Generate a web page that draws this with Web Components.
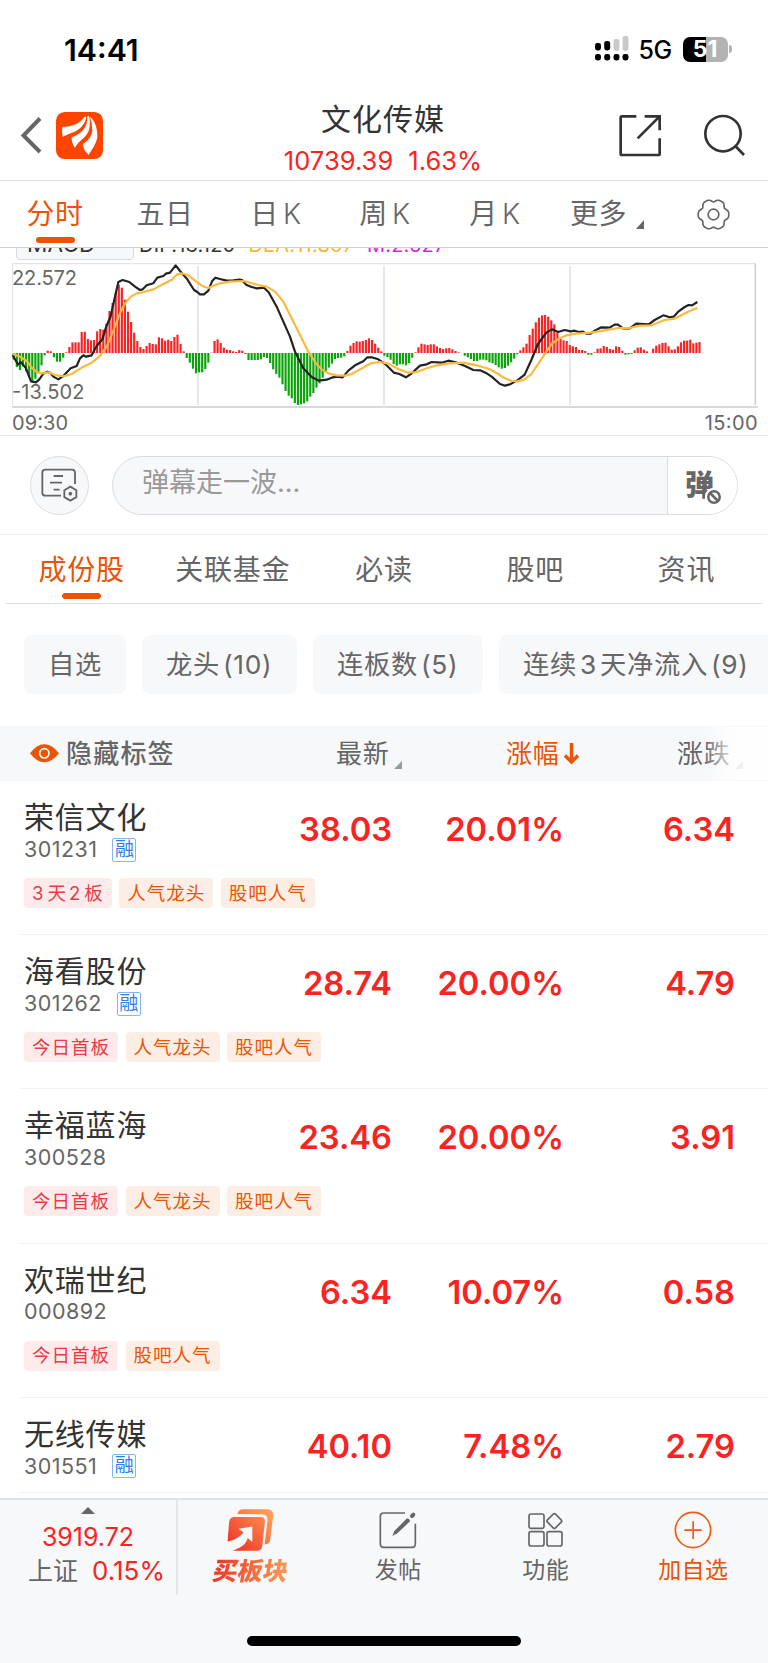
<!DOCTYPE html>
<html lang="zh-CN">
<head>
<meta charset="utf-8">
<title>文化传媒</title>
<style>
  body {
    margin: 0;
    width: 768px;
    height: 1663px;
    overflow: hidden;
    display: flex;
    flex-direction: column;
    background: #fff;
    color: #666;
    font-family: Inter, "Noto Sans CJK SC", sans-serif;
    line-height: 1;
    white-space: nowrap;
    --orange: #ea5404;
    --red: #fb2222;
    --panel: #f7f8fa;
  }
</style>
</head>
<body>
<em-status></em-status>
<em-header name="文化传媒" price="10739.39" change="1.63%"></em-header>
<em-period-tabs></em-period-tabs>
<em-macd></em-macd>
<em-danmu></em-danmu>
<em-section-tabs>
  <span class="on">成份股</span><span>关联基金</span><span>必读</span><span>股吧</span><span>资讯</span>
</em-section-tabs>
<em-chips>
  <span style="width:102px">自选</span><span style="width:155px">龙头<i>(10)</i></span><span style="width:170px">连板数<i>(5)</i></span><span style="width:299px">连续<i>3</i><i>天净流入</i><i>(9)</i></span>
</em-chips>
<em-table-head></em-table-head>
<em-stock name="荣信文化" code="301231" margin price="38.03" pct="20.01%" diff="6.34">
  <em-tag hot><span style="margin-right:3px">3</span>天<span style="margin:0 3px 0 2px">2</span>板</em-tag><em-tag>人气龙头</em-tag><em-tag>股吧人气</em-tag>
</em-stock>
<em-stock name="海看股份" code="301262" margin price="28.74" pct="20.00%" diff="4.79">
  <em-tag hot>今日首板</em-tag><em-tag>人气龙头</em-tag><em-tag>股吧人气</em-tag>
</em-stock>
<em-stock name="幸福蓝海" code="300528" price="23.46" pct="20.00%" diff="3.91">
  <em-tag hot>今日首板</em-tag><em-tag>人气龙头</em-tag><em-tag>股吧人气</em-tag>
</em-stock>
<em-stock name="欢瑞世纪" code="000892" price="6.34" pct="10.07%" diff="0.58">
  <em-tag hot>今日首板</em-tag><em-tag>股吧人气</em-tag>
</em-stock>
<em-stock style="height:95px" name="无线传媒" code="301551" margin price="40.10" pct="7.48%" diff="2.79"></em-stock>
<em-bottom-bar></em-bottom-bar>

<script>
class EmStatus extends HTMLElement {
  constructor() {
    super();
    this.attachShadow({mode: 'open'}).innerHTML = `
      <style>
        :host {
          display: flex;
          align-items: center;
          justify-content: space-between;
          height: 98px;
          padding: 0 36px 0 64px;
          box-sizing: border-box;
          color: #000;
        }
        .time { font-size: 30.3px; font-weight: 600; margin-top: 2px; }
        .right { display: flex; align-items: center; }
        .net { font-size: 25px; font-weight: 500; margin: 2px 11px 0 10px; letter-spacing: -.6px; }
        .battery {
          display: flex;
          align-items: center;
          justify-content: center;
          width: 45px;
          height: 25px;
          border-radius: 7px;
          background: linear-gradient(90deg, #000 52%, #b3b3b3 52%);
          color: #fff;
          font-size: 23px;
          font-weight: 700;
        }
        .cap { width: 3px; height: 8px; margin-left: 1.5px; border-radius: 0 4px 4px 0; background: #b3b3b3; }
      </style>
      <div class="time">14:41</div>
      <div class="right">
        <svg width="34" height="26" viewBox="0 0 34 26">
          <g fill="#c9c9c9">
            <rect x="18.5" y="3" width="6" height="12" rx="2.4"/>
            <rect x="27.5" y="0" width="6" height="15" rx="2.4"/>
          </g>
          <rect x="0" y="7" width="6" height="7.5" rx="2.4"/>
          <rect x="9.2" y="5" width="6" height="9.5" rx="2.4"/>
          <rect x="0" y="18" width="6" height="6.5" rx="2.4"/>
          <rect x="9.2" y="18" width="6" height="6.5" rx="2.4"/>
          <rect x="18.5" y="18" width="6" height="6.5" rx="2.4"/>
          <rect x="27.5" y="18" width="6" height="6.5" rx="2.4"/>
        </svg>
        <span class="net">5G</span>
        <span class="battery">51</span>
        <span class="cap"></span>
      </div>
    `;
  }
}

class EmHeader extends HTMLElement {
  constructor() {
    super();
    this.attachShadow({mode: 'open'}).innerHTML = `
      <style>
        :host {
          display: grid;
          grid-template-columns: 1fr auto 1fr;
          height: 83px;
          box-sizing: border-box;
          padding: 0 22px 0 20px;
          border-bottom: 1px solid #dedede;
        }
        .side { display: flex; align-items: flex-start; padding-top: 14px; }
        .end { justify-content: flex-end; gap: 41px; padding: 16px 0 0; }
        .logo { margin-left: 14px; }
        .back { margin-top: 5px; }
        .mid { text-align: center; }
        h1 { margin: 5px 0 0; font-size: 30px; line-height: 32px; font-weight: 400; color: #333; letter-spacing: 1px; }
        p { display: flex; justify-content: center; gap: 15px; margin: 14px 0 0; font-size: 25.5px; line-height: 24px; color: var(--red); letter-spacing: .05px; }
      </style>
      <div class="side">
        <svg class="back" width="22" height="37" viewBox="0 0 22 37" fill="none" stroke="#666" stroke-width="4">
          <path d="M20 1.500 3.500 18.500 20 35"/>
        </svg>
        <svg class="logo" width="47" height="47" viewBox="168 336 141 141">
          <rect x="168" y="336" width="141" height="141" rx="26" fill="#ff4400"/>
          <g fill="#fff">
            <path d="M187 381C217 380 241 369 254 350L259 350C256 372 240 388 222 396Q205 402 188 410Q185 396 187 381Z"/>
            <path d="M262 349L267 348C274 376 268 402 248 416Q233 428 224 443Q214 428 215 412C243 402 263 385 262 349Z"/>
            <path d="M270 351C286 362 293 390 292 410C290 430 276 447 266 465Q249 450 249 432C266 420 276 408 277 390Q277 370 270 351Z"/>
          </g>
        </svg>
      </div>
      <div class="mid">
        <h1>${this.getAttribute('name')}</h1>
        <p><span>${this.getAttribute('price')}</span><span>${this.getAttribute('change')}</span></p>
      </div>
      <div class="side end">
        <svg width="43" height="43" viewBox="707 342 129 129" fill="none" stroke="#333" stroke-width="8">
          <path d="M759 349H716Q712 349 712 353V461Q712 465 716 465H825Q829 465 829 461V415M784 349H829V391M828 350L763 415"/>
        </svg>
        <svg width="43" height="43" viewBox="959 342 129 129" fill="none" stroke="#333" stroke-width="8">
          <circle cx="1019" cy="401" r="53"/>
          <path d="M1056 438 1082 465"/>
        </svg>
      </div>
    `;
  }
}

class EmPeriodTabs extends HTMLElement {
  constructor() {
    super();
    // six-lobed gear outline
    let gear = [];
    for (let a = 0; a < 360; a += 5) {
      const t = a * Math.PI / 180;
      const r = 43 + 4 * Math.cos(6 * t) - 1.2 * Math.cos(12 * t);
      gear.push((r * Math.cos(t)).toFixed(1) + ',' + (r * Math.sin(t)).toFixed(1));
    }
    this.attachShadow({mode: 'open'}).innerHTML = `
      <style>
        :host {
          display: grid;
          grid-template-columns: 110px 110px 112px 106px 114px 110px 102px;
          height: 67px;
          box-sizing: border-box;
          border-bottom: 1px solid #cfcfd6;
          font-size: 28px;
          letter-spacing: .6px;
        }
        span { display: flex; align-items: center; justify-content: center; position: relative; }
        .on { color: var(--orange); }
        .on::after {
          content: "";
          position: absolute;
          bottom: 4px;
          width: 39px;
          height: 6px;
          border-radius: 3px;
          background: var(--orange);
        }
        b { font-weight: 300; margin-left: 4px; }
        .tri { margin: 21px 0 0 9px; }
      </style>
      <span class="on">分时</span>
      <span>五日</span>
      <span>日<b>K</b></span>
      <span>周<b>K</b></span>
      <span>月<b>K</b></span>
      <span>更多<svg class="tri" width="8" height="9"><path d="M8 0V9H0Z" fill="#666"/></svg></span>
      <span><svg width="33" height="33" viewBox="-49.500 -49.500 99 99" fill="none" stroke="#666" stroke-width="5">
        <polygon points="${gear.join(' ')}" stroke-linejoin="round"/><circle r="16"/>
      </svg></span>
    `;
  }
}

// histogram heights and line points share one unit: a third of a pixel
const ZERO = 339;
const HIST = [
  -20, -42, -51, -40, -55, -70, -85, -77, -60, -37, -7, 7, 5, -13, -26, -26, -14, 2, 18, 32,
  32, 32, 63, 64, 42, 38, 39, 65, 72, 70, 88, 126, 150, 180, 205, 196, 160, 124, 93, 61,
  36, 18, 12, 21, 30, 27, 26, 47, 44, 37, 40, 36, 48, 55, 27, 5, -15, -29, -47, -61,
  -58, -58, -48, -29, 1, 36, 41, 30, 16, 10, 9, 5, 3, 9, 7, -3, -21, -21, -21, -21,
  -19, -12, -15, -30, -49, -63, -74, -94, -114, -128, -136, -150, -156, -154, -151, -145, -131, -120, -104, -91,
  -74, -55, -44, -32, -18, -15, -14, -10, 6, 22, 30, 35, 34, 36, 39, 44, 39, 28, 16, 5,
  -8, -12, -20, -33, -38, -34, -34, -37, -30, -14, 2, 17, 28, 26, 24, 26, 26, 20, 15, 12,
  14, 15, 11, 6, 2, 0, -8, -13, -18, -24, -24, -20, -20, -22, -28, -31, -36, -43, -47, -45,
  -38, -28, -17, -4, 8, 17, 28, 54, 73, 92, 106, 113, 114, 109, 98, 86, 60, 42, 38, 36,
  24, 20, 18, 9, 9, 6, -5, -5, 2, 13, 14, 21, 18, 12, 10, 20, 18, 7, -5, -4,
  -3, 8, 16, 17, 10, 5, 0, 13, 22, 26, 30, 31, 20, 10, 11, 20, 32, 37, 37, 40,
  29, 31, 33
];
const DIF = '38,345 54,374 62,366 77,383 93,424 108,427 118,418 130,401 142,395 150,398 160,410 175,418 190,408 212,385 230,378 240,355 250,346 258,350 275,346 290,318 307,298 318,262 332,228 345,170 355,126 368,120 388,126 405,140 420,150 428,148 440,136 460,130 472,113 490,108 498,101 510,98 527,76 540,93 562,118 582,150 592,156 600,163 612,163 625,152 636,124 646,113 660,117 680,122 700,121 718,119 726,120 738,134 755,141 770,145 792,143 806,157 830,200 850,245 870,290 885,335 910,385 935,411 957,422 980,419 995,413 1010,410 1028,412 1045,392 1065,376 1090,364 1102,352 1115,352 1135,358 1158,374 1182,398 1198,402 1218,412 1235,400 1260,377 1280,373 1295,366 1325,368 1345,362 1370,368 1395,378 1420,390 1440,391 1460,400 1475,410 1500,432 1515,437 1530,433 1552,421 1574,404 1594,360 1614,312 1639,278 1656,268 1674,276 1694,270 1712,274 1724,272 1736,276 1749,275 1759,281 1772,281 1784,272 1804,262 1829,263 1844,254 1854,254 1869,265 1889,265 1909,251 1946,253 1964,240 1990,226 2009,232 2021,230 2036,214 2054,201 2066,195 2076,196 2092,186';
const DEA = '38,341 60,350 80,363 95,383 112,397 125,400 145,397 165,405 190,409 215,402 250,380 275,368 298,350 320,320 340,272 360,220 378,185 395,168 410,160 430,156 460,148 490,132 515,119 530,104 545,100 565,106 585,122 605,137 625,144 640,137 660,130 690,125 730,123 750,128 775,135 800,140 825,155 850,185 875,235 900,285 925,335 950,373 965,388 985,400 1010,406 1035,407 1055,402 1080,388 1115,369 1140,366 1165,371 1195,387 1225,398 1250,396 1280,385 1310,376 1350,370 1390,368 1430,376 1470,388 1495,402 1515,415 1535,423 1552,424 1574,418 1594,402 1619,365 1639,335 1656,310 1674,298 1699,286 1729,281 1774,278 1814,271 1854,264 1889,264 1919,257 1954,256 1994,240 2024,236 2049,223 2074,211 2092,204';

class EmMacd extends HTMLElement {
  constructor() {
    super();
    const bars = HIST.map((h, i) => {
      const x = (38 + i * 9.267).toFixed(1);
      return `<rect x="${x}" y="${h > 0 ? ZERO - h : ZERO}" width="6.500" height="${Math.abs(h)}" fill="${h > 0 ? '#fa2323' : '#0aa30a'}"/>`;
    }).join('');
    const grid = [594, 1152, 1710].map(x => `<path d="M${x} 77V495" stroke="#e3e8ee" stroke-width="6"/>`).join('');
    this.attachShadow({mode: 'open'}).innerHTML = `
      <style>
        :host {
          display: flex;
          flex-direction: column;
          justify-content: flex-end;
          height: 188px;
          box-sizing: border-box;
          overflow: hidden;
          border-bottom: 1px solid #e6e6e9;
          font-size: 20px;
        }
        .legend { display: flex; align-items: flex-end; padding-left: 16px; flex: none; letter-spacing: .2px; }
        .pick {
          width: 118px;
          height: 36px;
          line-height: 37px;
          box-sizing: border-box;
          padding-left: 10px;
          border: 1px solid #d8dbe0;
          border-radius: 4px;
          background: var(--panel);
          color: #333;
          font-size: 22.5px;
        }
        .legend span { margin-left: 13px; padding-bottom: 5px; }
        svg { display: block; flex: none; }
        text { fill: #666; font-size: 60px; }
      </style>
      <div class="legend">
        <div class="pick">MACD</div>
        <span style="color:#333;margin-left:5px">DIF:13.120</span>
        <span style="color:#fdb52c">DEA:11.807</span>
        <span style="color:#e01be0">M:2.627</span>
      </div>
      <svg width="768" height="175" viewBox="0 60 2304 525">
        <path d="M38 71H2266" stroke="#e4e4e6" stroke-width="4"/>
        <path d="M38 70V495" stroke="#dcdfe4" stroke-width="3"/>
        <path d="M2266 70V495" stroke="#ccd0d6" stroke-width="5"/>
        ${grid}
        <path d="M36 501H2274" stroke="#cdcdd1" stroke-width="5"/>
        ${bars}
        <g fill="none" stroke-width="6.500" stroke-linejoin="round">
          <polyline points="${DIF}" stroke="#222"/>
          <polyline points="${DEA}" stroke="#fdb93a"/>
        </g>
        <text x="36" y="135" textLength="195">22.572</text>
        <text x="36" y="476" textLength="217">-13.502</text>
        <text x="36" y="570" textLength="168">09:30</text>
        <text x="2114" y="570" textLength="159">15:00</text>
      </svg>
    `;
  }
}

class EmDanmu extends HTMLElement {
  constructor() {
    super();
    this.attachShadow({mode: 'open'}).innerHTML = `
      <style>
        :host {
          display: flex;
          align-items: center;
          gap: 23px;
          height: 99px;
          box-sizing: border-box;
          padding: 1px 30px 0;
          border-bottom: 1px solid #f0f0f2;
        }
        .set, .input {
          box-sizing: border-box;
          height: 59px;
          border: 1px solid #dadbe1;
          border-radius: 30px;
          background: var(--panel);
        }
        .set { width: 59px; display: flex; align-items: center; justify-content: center; }
        .input { display: flex; width: 626px; overflow: hidden; }
        .hint { flex: 1; padding-left: 29px; line-height: 52px; font-size: 27px; color: #999; }
        .send {
          width: 69px;
          border-left: 1px solid #dadbe1;
          background: #fff;
          font-size: 29px;
          line-height: 57px;
          font-weight: 900;
          position: relative;
          text-indent: 17px;
        }
        .send svg { position: absolute; left: 37px; top: 31px; }
      </style>
      <div class="set">
        <svg width="37" height="35" viewBox="125 88 111 105" fill="none" stroke="#666" stroke-width="5.500">
          <path d="M185 171H138Q129 171 129 162V102Q129 93 138 93H218Q227 93 227 102V136M163 112H191M152 132H188M163 153H181"/>
          <path d="M213 144 231 154.500V175.500L213 186 195 175.500V154.500Z"/>
          <circle cx="213" cy="165" r="5.500" fill="#666" stroke="none"/>
        </svg>
      </div>
      <div class="input">
        <div class="hint">弹幕走一波...</div>
        <div class="send">弹<svg width="18" height="18" viewBox="-9 -9 18 18" fill="none" stroke="#666" stroke-width="2.500">
          <circle r="8" fill="#fff" stroke="#fff"/><circle r="5.700"/><path d="M-4-4 4 4"/>
        </svg></div>
      </div>
    `;
  }
}

class EmSectionTabs extends HTMLElement {
  constructor() {
    super();
    this.attachShadow({mode: 'open'}).innerHTML = `
      <style>
        :host {
          display: grid;
          grid-template-columns: repeat(5, 1fr);
          height: 69px;
          margin: 0 6px;
          box-sizing: border-box;
          border-bottom: 1px solid #dfe0e3;
          font-size: 28px;
          letter-spacing: .8px;
        }
        ::slotted(span) { display: flex; align-items: center; justify-content: center; padding-top: 2px; }
        ::slotted(.on) {
          color: var(--orange);
          background: linear-gradient(var(--orange), var(--orange)) no-repeat center 58px / 33px 6px,
            radial-gradient(circle at 3px 3px, var(--orange) 2.6px, transparent 3.2px) no-repeat 56px 58px / 6px 6px,
            radial-gradient(circle at 3px 3px, var(--orange) 2.6px, transparent 3.2px) no-repeat 89px 58px / 6px 6px;
        }
      </style>
      <slot></slot>
    `;
  }
}

class EmChips extends HTMLElement {
  constructor() {
    super();
    this.attachShadow({mode: 'open'}).innerHTML = `
      <style>
        :host { display: flex; gap: 16px; padding: 31px 0 32px 24px; height: 59px; overflow: hidden; font-size: 26.3px; letter-spacing: .7px; }
        ::slotted(span) {
          flex: none;
          box-sizing: border-box;
          display: flex;
          gap: 3px;
          align-items: center;
          padding: 2px 0 0 24px;
          border-radius: 8px;
          background: var(--panel);
        }
      </style>
      <slot></slot>
    `;
    for (const i of this.querySelectorAll('i')) {
      i.style.fontStyle = 'normal';
    }
  }
}

class EmTableHead extends HTMLElement {
  constructor() {
    super();
    const tri = '<svg class="tri" width="8" height="8"><path d="M8 0V8H0Z" fill="#999"/></svg>';
    this.attachShadow({mode: 'open'}).innerHTML = `
      <style>
        :host {
          display: grid;
          grid-template-columns: 306px 200px 171px 91px;
          align-items: center;
          height: 55px;
          box-sizing: border-box;
          position: relative;
          background: var(--panel);
          font-size: 26px;
          letter-spacing: .8px;
        }
        div { display: flex; align-items: center; }
        .hide { padding-left: 30px; gap: 7px; font-weight: 500; letter-spacing: 1.2px; }
        .last { padding-left: 30px; }
        .up { color: var(--orange); gap: 4px; }
        .tri { margin: 23px 0 0 4px; }
        .fade {
          position: absolute;
          top: 1px;
          right: 0;
          bottom: 1px;
          width: 64px;
          background: linear-gradient(90deg, #fff0, #ffffffd0 45%, #fffffff2);
        }
      </style>
      <div class="hide">
        <svg width="29" height="19" viewBox="90 97 87 57"><path d="M90 125Q110 98 133 98T177 125Q156 152 133 152T90 125Z" fill="#ea5404"/><circle cx="133" cy="125" r="14" fill="none" stroke="#fff" stroke-width="5"/></svg>
        隐藏标签
      </div>
      <div class="last">最新${tri}</div>
      <div class="up">涨幅<svg width="15" height="22" viewBox="0 0 15 22" fill="none" stroke="#ea5404" stroke-width="3.500"><path d="M7.500 0V19M1 12.500 7.500 19 14 12.500"/></svg></div>
      <div>涨跌${tri}</div>
      <i class="fade"></i>
    `;
  }
}

class EmTag extends HTMLElement {
  constructor() {
    super();
    this.attachShadow({mode: 'open'}).innerHTML = `
      <style>
        :host {
          display: flex;
          align-items: center;
          height: 30px;
          padding: 0 8px;
          border-radius: 4px;
          background: #fdeee5;
          color: var(--orange);
          font-size: 18.5px;
          letter-spacing: 1px;
        }
        :host([hot]) { background: #fdebec; color: #e93b45; }
      </style>
      <slot></slot>
    `;
  }
}

class EmStock extends HTMLElement {
  constructor() {
    super();
    const rong = this.hasAttribute('margin') ? '<i>融</i>' : '';
    this.attachShadow({mode: 'open'}).innerHTML = `
      <style>
        :host {
          display: block;
          height: 154.2px;
          margin-left: 20px;
          box-sizing: border-box;
          border-bottom: 1px solid #f3f3f5;
        }
        .row { display: grid; grid-template-columns: 196px 172px 172px 171px; height: 97px; padding-left: 4px; }
        .name { margin: 18px 0 2px; font-size: 30px; line-height: 36px; letter-spacing: .8px; color: #333; }
        .code { display: flex; align-items: center; gap: 15px; height: 25px; font-size: 21.5px; letter-spacing: .45px; }
        i {
          width: 24px;
          height: 24px;
          line-height: 21px;
          box-sizing: border-box;
          border: 1px solid #86b5ef;
          border-radius: 2px;
          text-align: center;
          font-size: 19px;
          font-style: normal;
          letter-spacing: 0;
          color: #2f80e4;
        }
        b { margin-top: 31px; line-height: 34px; text-align: right; font-size: 32.700px; font-weight: 600; color: var(--red); }
        .tags { display: flex; gap: 7.5px; padding-left: 4px; }
      </style>
      <div class="row">
        <div>
          <div class="name">${this.getAttribute('name')}</div>
          <div class="code">${this.getAttribute('code')}${rong}</div>
        </div>
        <b>${this.getAttribute('price')}</b>
        <b>${this.getAttribute('pct')}</b>
        <b>${this.getAttribute('diff')}</b>
      </div>
      <div class="tags"><slot></slot></div>
    `;
  }
}

class EmBottomBar extends HTMLElement {
  constructor() {
    super();
    this.attachShadow({mode: 'open'}).innerHTML = `
      <style>
        :host {
          flex: 1;
          display: flex;
          flex-direction: column;
          margin-top: 5px;
          border-top: 2px solid #dfe1e4;
          background: var(--panel);
        }
        .bar { display: grid; grid-template-columns: 178px repeat(4, 1fr); height: 95px; }
        .index {
          display: flex;
          flex-direction: column;
          align-items: center;
          box-sizing: border-box;
          border-right: 2px solid #e4e5e8;
          padding-top: 7px;
          font-size: 25px;
          color: var(--red);
        }
        .index p { margin: 10px 0 0; line-height: 26px; }
        .index p + p { margin: 8px 0 0 28px; align-self: flex-start; display: flex; gap: 14px; }
        .index p + p span { font-size: 26px; }
        .index em { font-style: normal; color: #666; }
        .item { display: flex; flex-direction: column; align-items: center; font-size: 23px; letter-spacing: .4px; margin-right: 2px; }
        .item svg { height: 42px; margin: 9px 0 8px; }
        .item.add { color: var(--orange); }
        .buy {
          font-size: 25px;
          line-height: 25px;
          padding: 0 3px;
          font-weight: 900;
          letter-spacing: 0;
          transform: skewX(-10deg);
          color: transparent;
          background: linear-gradient(90deg, #ee2f24, #ff9f55);
          -webkit-background-clip: text;
          background-clip: text;
        }
        .home { width: 274px; height: 10px; border-radius: 5px; margin: 41px auto 0; background: #000; }
      </style>
      <div class="bar">
        <div class="index">
          <svg width="14" height="7"><path d="M7 0 14 7H0Z" fill="#666"/></svg>
          <p>3919.72</p>
          <p><em>上证</em><span>0.15%</span></p>
        </div>
        <div class="item">
          <svg width="47" viewBox="684 386 141 127">
            <defs>
              <linearGradient id="a" x1="0" y1="1" x2="1" y2="0"><stop stop-color="#ee2b23"/><stop offset="1" stop-color="#fc8a50"/></linearGradient>
              <linearGradient id="b" x1="0" y1="1" x2="1" y2="0"><stop stop-color="#f65a38"/><stop offset="1" stop-color="#ffa45c"/></linearGradient>
            </defs>
            <path fill="url(#b)" d="M715 401Q718 387 732 387H806Q825 389 823 407L814 480Q811 494 797 493L806 420Q807 403 790 402Z"/>
            <path fill="url(#a)" d="M706 410H785Q800 410 798 425L790 499Q788 512 776 512H700C730 503 742 490 746 474L760 486V439L718 446 733 456C724 470 706 480 685 484L690 424Q692 410 706 410Z"/>
          </svg>
          <span class="buy">买板块</span>
        </div>
        <div class="item">
          <svg width="38" viewBox="-12 386 114 126" fill="none" stroke="#666" stroke-width="5">
            <path d="M66 398H2Q-8 398-8 408V491Q-8 501 2 501H87Q97 501 97 491V430"/>
            <path d="M28 467 34 452 72 414Q81 416 81 423L43 459Z" fill="#666" stroke="none"/>
            <path d="M87 407 91 403" stroke-width="12" stroke-linecap="round"/>
          </svg>
          发帖
        </div>
        <div class="item">
          <svg width="36" viewBox="435 386 108 126" fill="none" stroke="#666" stroke-width="5">
            <rect x="438" y="401" width="45" height="43" rx="6"/>
            <rect x="438" y="454" width="45" height="43" rx="6"/>
            <rect x="492" y="454" width="45" height="43" rx="6"/>
            <rect x="497" y="405" width="34" height="34" rx="5" transform="rotate(45 514 422)"/>
          </svg>
          功能
        </div>
        <div class="item add">
          <svg width="38" viewBox="873 386 114 126" fill="none" stroke="#ee5a10" stroke-width="5">
            <circle cx="930" cy="449" r="53"/>
            <path d="M904 449.500H956M930.500 423V476"/>
          </svg>
          加自选
        </div>
      </div>
      <div class="home"></div>
    `;
  }
}

window.customElements.define('em-status', EmStatus);
window.customElements.define('em-header', EmHeader);
window.customElements.define('em-period-tabs', EmPeriodTabs);
window.customElements.define('em-macd', EmMacd);
window.customElements.define('em-danmu', EmDanmu);
window.customElements.define('em-section-tabs', EmSectionTabs);
window.customElements.define('em-chips', EmChips);
window.customElements.define('em-table-head', EmTableHead);
window.customElements.define('em-tag', EmTag);
window.customElements.define('em-stock', EmStock);
window.customElements.define('em-bottom-bar', EmBottomBar);
</script>
</body>
</html>
